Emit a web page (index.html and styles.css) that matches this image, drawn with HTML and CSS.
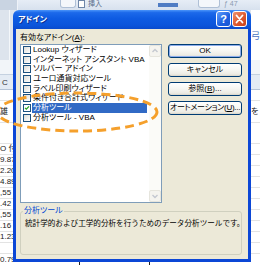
FILE: index.html
```html
<!DOCTYPE html>
<html lang="ja">
<head>
<meta charset="utf-8">
<title>アドイン</title>
<link rel="stylesheet" href="styles.css">
</head>
<body>
<div class="screen">
  <div class="excel">
    <div class="ribbon">
      <span class="rb-dark"></span>
      <span class="rb-btn rb-btn1"></span>
      <span class="rb-doc"></span>
      <span class="rb-text">挿入</span>
      <span class="rb-bar"></span>
      <span class="rb-btn rb-btn2"></span>
      <span class="rb-fx">ƒ 47</span>
    </div>
    <div class="band band-top"><span class="lc lc-panel"></span><span class="rc rc-name">弓</span></div>
    <div class="band band-formula"><span class="lc"></span><span class="rc"></span></div>
    <div class="band band-head"><span class="lc lc-head">C</span><span class="rc"></span></div>
    <div class="row r11"><span class="lt"></span><span class="rt"></span></div>
    <div class="row r22"><span class="lt">雄</span><span class="rt">を</span></div>
    <div class="row r21"><span class="lt"></span><span class="rt"></span></div>
    <div class="row"><span class="lt">O 付</span><span class="rt"></span></div>
    <div class="row"><span class="lt num">9.87</span><span class="rt"></span></div>
    <div class="row"><span class="lt num">2.20</span><span class="rt"></span></div>
    <div class="row"><span class="lt num">4.89</span><span class="rt"></span></div>
    <div class="row"><span class="lt num">,55</span><span class="rt"></span></div>
    <div class="row"><span class="lt num">.42</span><span class="rt"></span></div>
    <div class="row"><span class="lt num">,55</span><span class="rt"></span></div>
    <div class="row"><span class="lt num">.16</span><span class="rt"></span></div>
    <div class="row"><span class="lt num">1.23</span><span class="rt"></span></div>
    <div class="row"><span class="lt"></span><span class="rt"></span></div>
    <div class="row last"><span class="lt val">0.79002</span><span class="tick t1"></span><span class="tick t2"></span></div>
  </div>

  <div class="dialog">
    <div class="titlebar">
      <span class="title">アドイン</span>
      <span class="tb-btn tb-help">?</span>
      <span class="tb-btn tb-close"><svg viewBox="0 0 13 14" width="13" height="14"><path d="M3.5 3.5 L9.5 10.5 M9.5 3.5 L3.5 10.5" stroke="#fff" stroke-width="1.8" stroke-linecap="round"/></svg></span>
    </div>
    <div class="frame">
      <div class="main">
        <div class="lbl">有効なアドイン(<u>A</u>):</div>
        <div class="list">
          <div class="items">
            <div class="item"><span class="cb"></span><span class="it">Lookup ウィザード</span></div>
            <div class="item"><span class="cb"></span><span class="it">インターネット アシスタント VBA</span></div>
            <div class="item"><span class="cb"></span><span class="it">ソルバー アドイン</span></div>
            <div class="item"><span class="cb"></span><span class="it">ユーロ通貨対応ツール</span></div>
            <div class="item"><span class="cb"></span><span class="it">ラベル印刷ウィザード</span></div>
            <div class="item"><span class="cb"></span><span class="it">条件付き合計式ウィザード</span></div>
            <div class="item sel"><span class="cb on"><svg viewBox="0 0 8 8" width="8" height="8"><path d="M1.3 3.8 L3.1 5.6 L6.7 1.9" fill="none" stroke="#21A121" stroke-width="1.6"/></svg></span><span class="it">分析ツール</span></div>
            <div class="item"><span class="cb"></span><span class="it">分析ツール - VBA</span></div>
          </div>
          <div class="scroll">
            <span class="sb"><svg viewBox="0 0 10 10" width="10" height="10"><path d="M2.5 6 L5 3.5 L7.5 6" fill="none" stroke="#C4C8D0" stroke-width="1.4"/></svg></span>
            <span class="sb"><svg viewBox="0 0 10 10" width="10" height="10"><path d="M2.5 4 L5 6.5 L7.5 4" fill="none" stroke="#C4C8D0" stroke-width="1.4"/></svg></span>
          </div>
        </div>
        <div class="btns">
          <div class="btn def">OK</div>
          <div class="btn">キャンセル</div>
          <div class="btn">参照(<u>B</u>)...</div>
          <div class="btn tight">オートメーション(<u>U</u>)...</div>
        </div>
      </div>
      <fieldset class="group">
        <legend>分析ツール</legend>
        <p class="desc">統計学的および工学的分析を行うためのデータ分析ツールです。</p>
      </fieldset>
    </div>
  </div>

  <svg class="annot" width="260" height="267" viewBox="0 0 260 267">
    <ellipse cx="77" cy="112" rx="80" ry="19" fill="none" stroke="#F5A02C" stroke-width="3" stroke-dasharray="9 5"/>
  </svg>
</div>
</body>
</html>
```

FILE: styles.css
```css
* { box-sizing: border-box; margin: 0; padding: 0; }
html, body { width: 260px; height: 267px; overflow: hidden; background: #fff; }
body {
  font-family: "Liberation Sans", "Noto Sans CJK JP", sans-serif;
  font-size: 8px;
  color: #000;
}
.screen { position: relative; width: 260px; height: 267px; overflow: hidden; background: #fff; }

/* ---------- Excel behind the dialog ---------- */
.excel { display: flex; flex-direction: column; width: 260px; height: 267px; }
.ribbon {
  height: 10px; flex: none;
  display: flex; align-items: flex-start;
  background: linear-gradient(#E6EDF6, #D7E1EE);
}
.rb-dark { width: 18px; height: 10px; background: #C9D4E2; border-right: 1px solid #EEF2F8; }
.rb-btn { height: 8px; border: 1px solid #AFC0D6; border-top: 0; border-radius: 0 0 3px 3px; background: #F4F7FB; }
.rb-btn1 { width: 16px; margin-left: 42px; }
.rb-doc { width: 7px; height: 8px; margin-left: 2px; background: #fff; border: 1px solid #6E86A8; }
.rb-text { margin-left: 3px; font-size: 7px; line-height: 8px; color: #5A6E8C; }
.rb-bar { width: 20px; height: 4px; margin: 3px 0 0 56px; background: #4F7CC4; }
.rb-btn2 { width: 22px; margin-left: 20px; }
.rb-fx { margin-left: 4px; font-size: 7px; line-height: 8px; color: #8A9AB0; }

.band { display: flex; justify-content: space-between; flex: none; }
.band-top { height: 50px; background: #DDE4ED; }
.band-formula { height: 15px; background: #F2F5F9; border-bottom: 1px solid #C5D1E0; }
.band-head { height: 15px; background: #E4EBF4; border-bottom: 1px solid #B5C3D6; }
.lc { width: 13px; }
.rc { width: 9px; }
.lc-panel { border-right: 1px solid #F4F7FA; width: 10px; }
.rc-name { background: #fff; color: #4A72C0; font-size: 9px; line-height: 12px; padding-top: 20px; overflow: hidden; }
.lc-head { font-size: 8px; line-height: 15px; padding-left: 2px; color: #333; }

.row {
  height: 11px; flex: none;
  display: flex; justify-content: space-between; align-items: center;
  border-bottom: 1px solid #E3E3E3;
  font-size: 8px; line-height: 10px; color: #222;
  white-space: nowrap;
}
.r11 { height: 11px; }
.r22 { height: 22px; }
.r21 { height: 21px; }
.lt { margin-left: 0; }
.rt { width: 9px; overflow: hidden; }
.row.last { border-bottom: 0; justify-content: flex-start; align-items: flex-end; }
.tick { width: 1px; height: 6px; background: #222; }
.t1 { margin-left: 50px; }
.t2 { margin-left: 69px; }

/* ---------- dialog ---------- */
.dialog {
  position: absolute; left: 13px; top: 10px;
  width: 238px; height: 252px;
  display: flex; flex-direction: column;
}
.titlebar {
  height: 19px; flex: none;
  display: flex; align-items: flex-start; gap: 1px;
  padding: 1px 4px 0 5px;
  border-radius: 6px 6px 0 0;
  background: linear-gradient(#4A95FA 0%, #1C69EA 14%, #0E5BE2 45%, #0B55DB 80%, #0A4BCD 100%);
  color: #fff;
}
.title {
  flex: 1; font-weight: bold; font-size: 8px; line-height: 17px;
  font-feature-settings: "palt";
  text-shadow: 1px 1px 0 #0A2E8C;
}
.tb-btn {
  width: 15px; height: 16px; flex: none;
  border: 1px solid #fff; border-radius: 3px;
  display: flex; align-items: center; justify-content: center;
  color: #fff; font-weight: bold; font-size: 11px; line-height: 14px;
}
.tb-help { background: linear-gradient(135deg, #5D9CFB, #1C5FE0 60%, #1A56D2); }
.tb-close { background: linear-gradient(135deg, #F0926E, #DD5A30 55%, #C8401A); }

.frame {
  flex: 1;
  background: #ECE9D8;
  border: 3px solid #0C47D6; border-top: 0;
  padding: 3px 6px 4px 4px;
  display: flex; flex-direction: column;
}
.main {
  display: grid;
  grid-template-columns: 142px 74px;
  grid-template-rows: 12px 159px;
  column-gap: 6px;
}
.lbl { grid-column: 1; grid-row: 1; line-height: 11px; font-feature-settings: "palt"; }
.list {
  grid-column: 1; grid-row: 2;
  border: 1px solid #7F9DB9; background: #fff;
  display: flex;
}
.items { flex: 1; display: flex; flex-direction: column; }
.item { height: 9.7px; display: flex; align-items: center; white-space: nowrap; }
.cb {
  width: 8px; height: 8px; flex: none; margin-left: 2px;
  border: 1px solid #1C5180;
  background: linear-gradient(135deg, #DCDCD7, #FFFFFF);
  display: flex; align-items: center; justify-content: center;
}
.cb svg { display: block; }
.cb.on { background: #fff; }
.it {
  flex: 1; margin: 0 2px 0 1px; padding-left: 1px;
  line-height: 9.7px; font-feature-settings: "palt";
}
.sel .it { background: #316AC5; color: #fff; }
.scroll {
  width: 12px; flex: none;
  display: flex; flex-direction: column; justify-content: space-between;
  background: #FBFBF8;
}
.sb {
  height: 12px; display: flex; align-items: center; justify-content: center;
  background: #F5F4EF; border: 1px solid #E6E5DD; border-radius: 2px;
}
.btns { grid-column: 2; grid-row: 2; display: flex; flex-direction: column; gap: 5px; }
.btn {
  height: 14px;
  border: 1px solid #003C74; border-radius: 3px;
  background: linear-gradient(#FFFFFF 0%, #F7F7F3 45%, #ECEBE4 85%, #D8D3C6 100%);
  text-align: center; line-height: 12px; font-size: 8px;
  font-feature-settings: "palt"; white-space: nowrap; overflow: hidden;
}
.btn.def { box-shadow: inset 0 0 0 1px #8CACEB; }
.btn.tight { letter-spacing: -0.3px; }

.group {
  flex: 1; margin-top: 3px;
  border: 1px solid #D0D0BF; border-radius: 3px;
  padding: 1px 4px 4px 4px;
  min-width: 0;
}
.group legend {
  color: #0046D5; font-size: 8px; line-height: 10px;
  padding: 0 1px; margin-left: -2px;
  font-feature-settings: "palt";
}
.desc { line-height: 10px; margin-top: 2px; white-space: nowrap; font-size: 7.6px; }

.annot { position: absolute; left: 0; top: 0; pointer-events: none; }
```
